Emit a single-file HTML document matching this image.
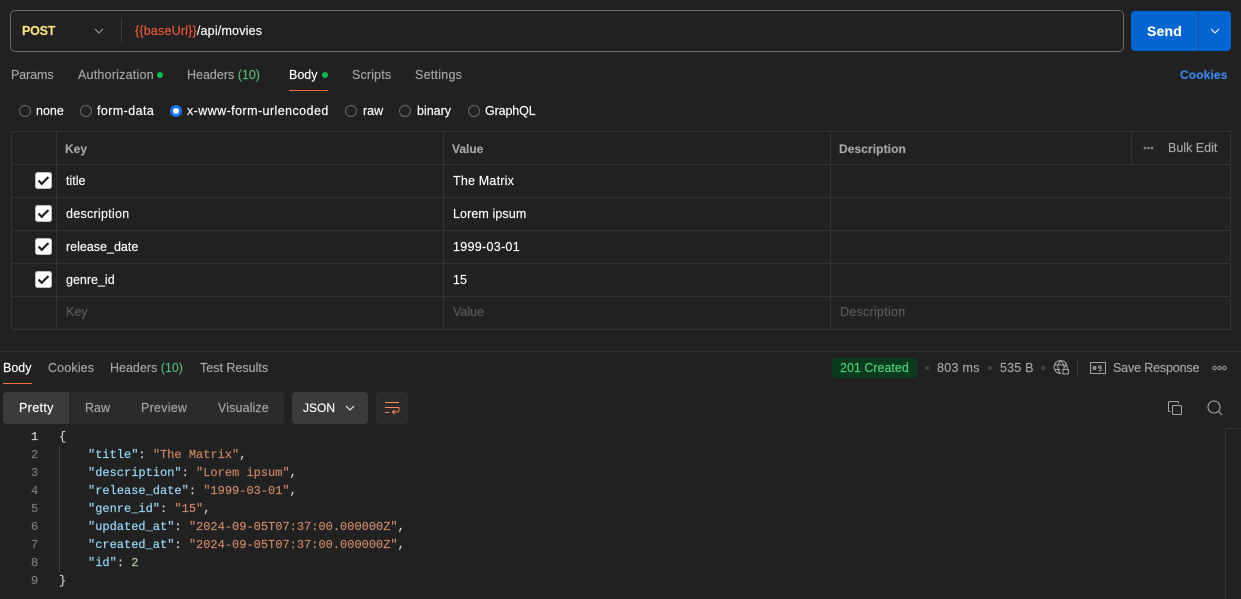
<!DOCTYPE html>
<html><head><meta charset="utf-8"><style>
html,body{margin:0;padding:0;background:#212121;width:1241px;height:599px;overflow:hidden}
body{position:relative;font-family:"Liberation Sans",sans-serif;font-size:12.5px;color:#fff;-webkit-text-stroke:.15px}
.t,.b,svg{position:absolute}
.t{white-space:nowrap;line-height:16px}
.g{color:#a6a6a6}.d{color:#fff}.gr{color:#5bb877}
.f{color:#5c5c5c}
.b{box-sizing:border-box}
.dot{position:absolute;width:6px;height:6px;border-radius:50%;background:#0cbb52}
.r{position:absolute;width:10px;height:10px;border:1.2px solid #6b6b6b;border-radius:50%}
.hl{position:absolute;height:1px;left:11px;width:1220px;background:#333}
.vl{position:absolute;width:1px;top:132px;height:198px;background:#333}
.c{position:absolute;left:35px;width:17px;height:17px;background:#fff;border-radius:3px;box-shadow:inset 0 0 0 1px #bbb}
.c svg{left:3px;top:3px}
pre,.m{font-family:"Liberation Mono",monospace;font-size:12px;line-height:18px;margin:0}
.m{position:absolute;white-space:pre}
.k{color:#9cdcfe}.s{color:#ce8a66}.n{color:#b5cea8}.p{color:#d4d4d4}
.ln{color:#7d7d7d;position:absolute;left:31px;font-family:"Liberation Mono",monospace;font-size:12px;line-height:18px}
</style></head><body>

<div class="b" style="left:10px;top:10px;width:1114px;height:42px;border:1px solid #6b6b6b;border-radius:5px"></div>
<div class="t" style="left:22px;top:23px;font-weight:bold;color:#ffe47e;letter-spacing:-.2px">POST</div>
<svg style="left:94px;top:27px" width="10" height="8" viewBox="0 0 10 8"><path d="M1 2l4 4 4-4" fill="none" stroke="#a6a6a6" stroke-width="1"/></svg>
<div class="b" style="left:121px;top:19px;width:1px;height:24px;background:#3d3d3d"></div>
<div class="t" style="left:135px;top:23px;letter-spacing:.19px"><span style="color:#f05a3a">{{baseUrl}}</span>/api/movies</div>

<div class="b" style="left:1131px;top:11px;width:100px;height:40px;background:#0265d2;border-radius:4px"></div>
<div class="b" style="left:1198px;top:11px;width:1px;height:40px;background:#0b4f9f"></div>
<div class="t" style="left:1147px;top:23px;font-weight:bold;font-size:14px;color:#fff;letter-spacing:.2px">Send</div>
<svg style="left:1210px;top:27px" width="10" height="8" viewBox="0 0 10 8"><path d="M1 2l4 4 4-4" fill="none" stroke="#fff" stroke-width="1"/></svg>

<div class="t g" style="left:11px;top:67px;letter-spacing:-.1px">Params</div>
<div class="t g" style="left:78px;top:67px;letter-spacing:.22px">Authorization</div>
<div class="dot" style="left:157px;top:72px"></div>
<div class="t g" style="left:187px;top:67px">Headers <span class="gr">(10)</span></div>
<div class="t d" style="left:289px;top:67px">Body</div>
<div class="dot" style="left:322px;top:72px"></div>
<div class="b" style="left:289px;top:90px;width:39px;height:1px;background:#ff6c37"></div>
<div class="t g" style="left:352px;top:67px;letter-spacing:.15px">Scripts</div>
<div class="t g" style="left:415px;top:67px;letter-spacing:.25px">Settings</div>
<div class="t" style="left:1180px;top:67px;font-weight:bold;color:#3d85ea;font-size:12px;letter-spacing:.12px">Cookies</div>

<div class="r" style="left:19px;top:105px"></div><div class="t d" style="left:36px;top:103px">none</div>
<div class="r" style="left:80px;top:105px"></div><div class="t d" style="left:97px;top:103px;letter-spacing:.42px">form-data</div>
<div class="b" style="left:170px;top:105px;width:12px;height:12px;border-radius:50%;background:#fff;border:3px solid #1a73e8"></div>
<div class="t d" style="left:187px;top:103px;letter-spacing:.43px">x-www-form-urlencoded</div>
<div class="r" style="left:345px;top:105px"></div><div class="t d" style="left:363px;top:103px">raw</div>
<div class="r" style="left:399px;top:105px"></div><div class="t d" style="left:417px;top:103px">binary</div>
<div class="r" style="left:468px;top:105px"></div><div class="t d" style="left:485px;top:103px;letter-spacing:-.12px">GraphQL</div>

<div class="hl" style="top:131px"></div>
<div class="hl" style="top:164px"></div>
<div class="hl" style="top:197px"></div>
<div class="hl" style="top:230px"></div>
<div class="hl" style="top:263px"></div>
<div class="hl" style="top:296px"></div>
<div class="hl" style="top:329px"></div>
<div class="vl" style="left:11px"></div>
<div class="vl" style="left:56px"></div>
<div class="vl" style="left:443px"></div>
<div class="vl" style="left:830px"></div>
<div class="vl" style="left:1230px"></div>
<div class="b" style="left:1131px;top:132px;width:1px;height:32px;background:#333"></div>

<div class="t" style="left:65px;top:141px;font-weight:bold;color:#a6a6a6;font-size:12px">Key</div>
<div class="t" style="left:452px;top:141px;font-weight:bold;color:#a6a6a6;font-size:12px">Value</div>
<div class="t" style="left:839px;top:141px;font-weight:bold;color:#a6a6a6;font-size:12px;letter-spacing:.08px">Description</div>
<svg style="left:1143px;top:145px" width="11" height="6"><circle cx="2" cy="3" r="1.3" fill="#8a8a8a"/><circle cx="5.5" cy="3" r="1.3" fill="#8a8a8a"/><circle cx="9" cy="3" r="1.3" fill="#8a8a8a"/></svg>
<div class="t g" style="left:1168px;top:140px">Bulk Edit</div>

<div class="c" style="top:172px"><svg width="11" height="11" viewBox="0 0 11 11"><path d="M.5 5.500l3.200 3.300 6.800-6.800" fill="none" stroke="#212121" stroke-width="2.200"/></svg></div>
<div class="c" style="top:205px"><svg width="11" height="11" viewBox="0 0 11 11"><path d="M.5 5.500l3.200 3.300 6.800-6.800" fill="none" stroke="#212121" stroke-width="2.200"/></svg></div>
<div class="c" style="top:238px"><svg width="11" height="11" viewBox="0 0 11 11"><path d="M.5 5.500l3.200 3.300 6.800-6.800" fill="none" stroke="#212121" stroke-width="2.200"/></svg></div>
<div class="c" style="top:271px"><svg width="11" height="11" viewBox="0 0 11 11"><path d="M.5 5.500l3.200 3.300 6.800-6.800" fill="none" stroke="#212121" stroke-width="2.200"/></svg></div>

<div class="t d" style="left:66px;top:173px">title</div><div class="t d" style="left:453px;top:173px;letter-spacing:.2px">The Matrix</div>
<div class="t d" style="left:66px;top:206px;letter-spacing:.27px">description</div><div class="t d" style="left:453px;top:206px;letter-spacing:.1px">Lorem ipsum</div>
<div class="t d" style="left:66px;top:239px">release_date</div><div class="t d" style="left:453px;top:239px;letter-spacing:.3px">1999-03-01</div>
<div class="t d" style="left:66px;top:272px">genre_id</div><div class="t d" style="left:453px;top:272px">15</div>
<div class="t f" style="left:66px;top:304px">Key</div><div class="t f" style="left:453px;top:304px">Value</div><div class="t f" style="left:840px;top:304px;letter-spacing:.27px">Description</div>

<div class="b" style="left:0;top:351px;width:1241px;height:1px;background:#333"></div>
<div class="t d" style="left:3px;top:360px">Body</div>
<div class="b" style="left:3px;top:383px;width:29px;height:1px;background:#ff6c37"></div>
<div class="t g" style="left:48px;top:360px;letter-spacing:.14px">Cookies</div>
<div class="t g" style="left:110px;top:360px">Headers <span class="gr">(10)</span></div>
<div class="t g" style="left:200px;top:360px">Test Results</div>

<div class="b" style="left:832px;top:358px;width:85px;height:20px;background:#0a3a1c;border-radius:4px"></div>
<div class="t" style="left:840px;top:360px;color:#4bd07c">201 Created</div>
<div class="b" style="left:925px;top:366px;width:4px;height:4px;border-radius:50%;background:#444"></div>
<div class="t g" style="left:937px;top:360px;letter-spacing:.3px">803 ms</div>
<div class="b" style="left:988px;top:366px;width:4px;height:4px;border-radius:50%;background:#444"></div>
<div class="t g" style="left:1000px;top:360px;letter-spacing:.2px">535 B</div>
<div class="b" style="left:1041px;top:366px;width:4px;height:4px;border-radius:50%;background:#444"></div>
<svg style="left:1053px;top:360px" width="17" height="16" viewBox="0 0 17 16" fill="none" stroke="#a6a6a6" stroke-width="1"><path d="M8 13.500A6.500 6.500 0 1 1 14 6"/><path d="M7.500 1C4 4 4 10 7.500 13.500M7.500 1c2.500 2 3.200 4 3.200 5.500M1.500 5h12M1.500 9.500h6"/><rect x="10" y="9.500" width="5.500" height="4.500"/><path d="M11 9.500V8a1.700 1.700 0 0 1 3.400 0v1.500"/></svg>
<div class="b" style="left:1077px;top:360px;width:1px;height:16px;background:#3d3d3d"></div>
<svg style="left:1090px;top:361px" width="16" height="14" viewBox="0 0 16 14" fill="none" stroke="#a6a6a6" stroke-width="1"><rect x=".5" y="1.500" width="15" height="11"/><path d="M3 7h3M3 7c0-2 3-2 3 0s-3 2-3 0M8.500 6c0-1.500 2.500-1.500 2.500 0v3c0 1-2 1-2.500.5M8.500 6c0 1.500 2.500 1.500 2.500 0M13 9h.5"/></svg>
<div class="t g" style="left:1113px;top:360px;letter-spacing:-.15px">Save Response</div>
<svg style="left:1212px;top:365px" width="15" height="6" fill="none" stroke="#a6a6a6" stroke-width="1"><circle cx="2.500" cy="3" r="1.700"/><circle cx="7.500" cy="3" r="1.700"/><circle cx="12.500" cy="3" r="1.700"/></svg>

<div class="b" style="left:3px;top:392px;width:281px;height:32px;background:#2b2b2b;border-radius:4px"></div>
<div class="b" style="left:3px;top:392px;width:66px;height:32px;background:#3b3b3b;border-radius:4px 0 0 4px"></div>
<div class="t d" style="left:19px;top:400px;letter-spacing:.35px">Pretty</div>
<div class="t g" style="left:85px;top:400px">Raw</div>
<div class="t g" style="left:141px;top:400px;letter-spacing:.25px">Preview</div>
<div class="t g" style="left:218px;top:400px;letter-spacing:.12px">Visualize</div>
<div class="b" style="left:292px;top:392px;width:76px;height:32px;background:#3b3b3b;border-radius:4px"></div>
<div class="t d" style="left:303px;top:400px;font-size:12px">JSON</div>
<svg style="left:345px;top:404px" width="10" height="8" viewBox="0 0 10 8"><path d="M1 2l4 4 4-4" fill="none" stroke="#fff" stroke-width="1"/></svg>
<div class="b" style="left:376px;top:392px;width:32px;height:32px;background:#2b2b2b;border-radius:4px"></div>
<svg style="left:384px;top:400px" width="16" height="16" viewBox="0 0 16 16" fill="none" stroke="#ff8a5c" stroke-width="1"><path d="M1 2.500h14M1 7.500h14M1 12.500h4"/><path d="M15 7.500v2.500a2 2 0 0 1-2 2H8.500M10.500 10l-2 2 2 2"/></svg>

<svg style="left:1167px;top:400px" width="16" height="16" viewBox="0 0 16 16" fill="none" stroke="#a6a6a6" stroke-width="1"><rect x="5.500" y="5.500" width="9" height="9" rx="1"/><path d="M3.500 11.500H2.500a1 1 0 0 1-1-1V2.500a1 1 0 0 1 1-1h8a1 1 0 0 1 1 1v1"/></svg>
<svg style="left:1207px;top:400px" width="16" height="16" viewBox="0 0 16 16" fill="none" stroke="#a6a6a6" stroke-width="1.100"><circle cx="7" cy="7" r="6"/><path d="M11.500 11.500l3.500 3.500"/></svg>
<div class="b" style="left:1225px;top:428px;width:1px;height:171px;background:#333"></div>
<div class="b" style="left:1225px;top:428px;width:16px;height:1px;background:#333"></div>

<div class="ln" style="top:428px;color:#d4d4d4">1</div>
<div class="ln" style="top:446px">2</div>
<div class="ln" style="top:464px">3</div>
<div class="ln" style="top:482px">4</div>
<div class="ln" style="top:500px">5</div>
<div class="ln" style="top:518px">6</div>
<div class="ln" style="top:536px">7</div>
<div class="ln" style="top:554px">8</div>
<div class="ln" style="top:572px">9</div>
<div class="b" style="left:59px;top:446px;width:1px;height:126px;background:#404040"></div>

<div class="m p" style="left:59px;top:428px">{</div>
<div class="m p" style="left:88px;top:446px"><span class="k">"title"</span>: <span class="s">"The Matrix"</span>,</div>
<div class="m p" style="left:88px;top:464px"><span class="k">"description"</span>: <span class="s">"Lorem ipsum"</span>,</div>
<div class="m p" style="left:88px;top:482px"><span class="k">"release_date"</span>: <span class="s">"1999-03-01"</span>,</div>
<div class="m p" style="left:88px;top:500px"><span class="k">"genre_id"</span>: <span class="s">"15"</span>,</div>
<div class="m p" style="left:88px;top:518px"><span class="k">"updated_at"</span>: <span class="s">"2024-09-05T07:37:00.000000Z"</span>,</div>
<div class="m p" style="left:88px;top:536px"><span class="k">"created_at"</span>: <span class="s">"2024-09-05T07:37:00.000000Z"</span>,</div>
<div class="m p" style="left:88px;top:554px"><span class="k">"id"</span>: <span class="n">2</span></div>
<div class="m p" style="left:59px;top:572px">}</div>

</body></html>
